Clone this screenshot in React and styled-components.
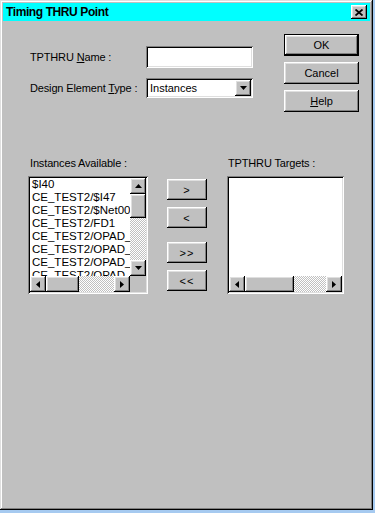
import React from 'react';
import styled, { createGlobalStyle } from 'styled-components';

const GlobalStyle = createGlobalStyle`
  html, body {
    margin: 0;
    padding: 0;
    background: #a6caf0;
  }
  body {
    font-family: "Liberation Sans", Arial, sans-serif;
    font-size: 11px;
    color: #000;
  }
`;

const raised = `
  background: #c0c0c0;
  box-shadow: inset -1px -1px #000, inset 1px 1px #fff, inset -2px -2px #808080, inset 2px 2px #dfdfdf;
`;

const sunken = `
  background: #fff;
  box-shadow: inset 1px 1px #808080, inset -1px -1px #fff, inset 2px 2px #000, inset -2px -2px #dfdfdf;
`;

const Window = styled.div`
  width: 373px;
  height: 510px;
  box-sizing: border-box;
  padding: 3px;
  background: #c0c0c0;
  box-shadow: inset -1px -1px #000, inset 1px 1px #dfdfdf, inset -2px -2px #808080, inset 2px 2px #fff;
  display: flex;
  flex-direction: column;
`;

const TitleBar = styled.div`
  height: 18px;
  background: #00ffff;
  display: flex;
  align-items: center;
  justify-content: space-between;
  padding: 0 3px;
`;

const Title = styled.span`
  font-weight: bold;
  font-size: 12px;
  letter-spacing: -0.4px;
`;

const CloseButton = styled.div`
  ${raised}
  width: 16px;
  height: 14px;
  display: flex;
  align-items: center;
  justify-content: center;
`;

const Body = styled.div`
  padding: 13px 0 0 27px;
  display: flex;
  flex-direction: column;
`;

const TopRow = styled.div`
  display: flex;
  align-items: flex-start;
`;

const Fields = styled.div`
  display: grid;
  grid-template-columns: 116px 107px;
  row-gap: 10px;
  align-items: center;
  margin-top: 12px;
`;

const Label = styled.span`
  white-space: nowrap;
  letter-spacing: -0.15px;
`;

const TextField = styled.div`
  ${sunken}
  height: 22px;
`;

const Select = styled.div`
  ${sunken}
  height: 20px;
  box-sizing: border-box;
  padding: 2px;
  display: flex;
  align-items: center;
`;

const SelectText = styled.span`
  flex: 1;
  padding-left: 2px;
`;

const ArrowButton = styled.div`
  ${raised}
  width: ${(p) => p.$w || 16}px;
  height: ${(p) => p.$h || 16}px;
  flex: none;
  display: flex;
  align-items: center;
  justify-content: center;
`;

const ButtonColumn = styled.div`
  display: flex;
  flex-direction: column;
  gap: 6px;
  margin-left: 31px;
`;

const PushButton = styled.div`
  ${raised}
  width: 75px;
  height: 22px;
  box-sizing: border-box;
  display: flex;
  align-items: center;
  justify-content: center;
  border: ${(p) => (p.$default ? '1px solid #000' : 'none')};
`;

const ListsRow = styled.div`
  display: flex;
  align-items: flex-start;
  margin-top: 45px;
  margin-left: -2px;
`;

const ListColumn = styled.div`
  width: ${(p) => p.$w}px;
  display: flex;
  flex-direction: column;
`;

const ListLabel = styled.div`
  line-height: 13px;
  height: 13px;
  margin-bottom: 6px;
  padding-left: ${(p) => p.$pad}px;
  white-space: nowrap;
  letter-spacing: -0.15px;
`;

const ListBox = styled.div`
  ${sunken}
  height: 118px;
  box-sizing: border-box;
  padding: 2px;
  display: grid;
  grid-template-columns: ${(p) => (p.$vscroll ? '1fr 16px' : '1fr')};
  grid-template-rows: 1fr 16px;
`;

const Items = styled.div`
  overflow: hidden;
  min-width: 0;
`;

const Item = styled.div`
  line-height: 13px;
  height: 13px;
  padding-left: 2px;
  white-space: nowrap;
  font-size: 11.5px;
`;

const VScroll = styled.div`
  display: flex;
  flex-direction: column;
`;

const HScroll = styled.div`
  display: flex;
`;

const Dither = styled.div`
  flex: 1;
  background: repeating-conic-gradient(#c0c0c0 0 25%, #fff 0 50%) 0 0 / 2px 2px;
`;

const Corner = styled.div`
  background: #c0c0c0;
`;

const MoveColumn = styled.div`
  display: flex;
  flex-direction: column;
  gap: 7px;
  padding-top: 22px;
  margin-left: 19px;
  margin-right: 20px;
`;

const MoveButton = styled.div`
  ${raised}
  width: 40px;
  height: 21px;
  display: flex;
  align-items: center;
  justify-content: center;
  margin-top: ${(p) => (p.$gap ? 7 : 0)}px;
  letter-spacing: 1px;
`;

const Tri = ({ dir }) => {
  const pts = {
    up: '3.5,0 7,4 0,4',
    down: '0,0 7,0 3.5,4',
    left: '4,0 4,7 0,3.5',
    right: '0,0 4,3.5 0,7',
  }[dir];
  const vertical = dir === 'up' || dir === 'down';
  return (
    <svg width={vertical ? 7 : 4} height={vertical ? 4 : 7} viewBox={vertical ? '0 0 7 4' : '0 0 4 7'}>
      <polygon points={pts} fill="#000" />
    </svg>
  );
};

const items = [
  '$I40',
  'CE_TEST2/$I47',
  'CE_TEST2/$Net0001',
  'CE_TEST2/FD1',
  'CE_TEST2/OPAD_DATA',
  'CE_TEST2/OPAD_RESET',
  'CE_TEST2/OPAD_LOAD',
  'CE_TEST2/OPAD_READY',
  'CE_TEST2/OPAD_RUN',
];

const HScrollBar = ({ thumb }) => (
  <HScroll>
    <ArrowButton><Tri dir="left" /></ArrowButton>
    <ArrowButton $w={thumb} />
    <Dither />
    <ArrowButton><Tri dir="right" /></ArrowButton>
  </HScroll>
);

export default function App() {
  return (
    <>
      <GlobalStyle />
      <Window>
        <TitleBar>
          <Title>Timing THRU Point</Title>
          <CloseButton>
            <svg width="8" height="7" viewBox="0 0 8 7">
              <path d="M0.5 0.5 L7.5 6.5 M7.5 0.5 L0.5 6.5" stroke="#000" strokeWidth="1.8" />
            </svg>
          </CloseButton>
        </TitleBar>
        <Body>
          <TopRow>
            <Fields>
              <Label>TPTHRU <u>N</u>ame :</Label>
              <TextField />
              <Label>Design Element <u>T</u>ype :</Label>
              <Select>
                <SelectText>Instances</SelectText>
                <ArrowButton><Tri dir="down" /></ArrowButton>
              </Select>
            </Fields>
            <ButtonColumn>
              <PushButton $default>OK</PushButton>
              <PushButton>Cancel</PushButton>
              <PushButton><span><u>H</u>elp</span></PushButton>
            </ButtonColumn>
          </TopRow>
          <ListsRow>
            <ListColumn $w={120}>
              <ListLabel $pad={2}>Instances Available :</ListLabel>
              <ListBox $vscroll>
                <Items>
                  {items.map((it) => (
                    <Item key={it}>{it}</Item>
                  ))}
                </Items>
                <VScroll>
                  <ArrowButton><Tri dir="up" /></ArrowButton>
                  <ArrowButton $h={24} />
                  <Dither />
                  <ArrowButton><Tri dir="down" /></ArrowButton>
                </VScroll>
                <HScrollBar thumb={33} />
                <Corner />
              </ListBox>
            </ListColumn>
            <MoveColumn>
              <MoveButton>&gt;</MoveButton>
              <MoveButton>&lt;</MoveButton>
              <MoveButton $gap>&gt;&gt;</MoveButton>
              <MoveButton>&lt;&lt;</MoveButton>
            </MoveColumn>
            <ListColumn $w={117}>
              <ListLabel $pad={1}>TPTHRU Targets :</ListLabel>
              <ListBox>
                <Items />
                <HScrollBar thumb={49} />
              </ListBox>
            </ListColumn>
          </ListsRow>
        </Body>
      </Window>
    </>
  );
}
